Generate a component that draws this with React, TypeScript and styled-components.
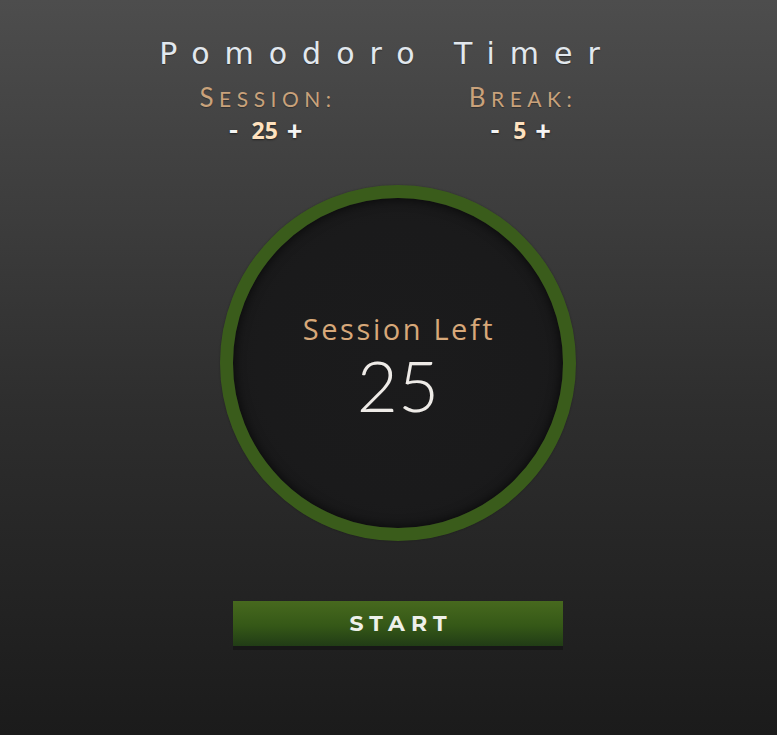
import React from "react";
import styled, { createGlobalStyle } from "styled-components";

const Global = createGlobalStyle`
  html, body { margin: 0; padding: 0; }
  body {
    min-height: 735px;
    background: linear-gradient(180deg, #4d4d4d 0%, #2e2e2e 55%, #1b1b1b 100%);
    font-family: "Lato", "Liberation Sans", sans-serif;
  }
`;

const Page = styled.main`
  display: flex;
  flex-direction: column;
  align-items: center;
  padding: 36px 0 0 19px;
  min-height: 735px;
  box-sizing: border-box;
`;

const Title = styled.h1`
  margin: 0;
  font-family: "DejaVu Sans", "Liberation Sans", sans-serif;
  font-weight: 400;
  font-size: 30px;
  line-height: 36px;
  letter-spacing: 15px;
  color: #e2e8ee;
  text-shadow: 0 1px 1px rgba(0, 0, 0, 0.35);
  padding-right: 22px;
`;

const Controls = styled.div`
  display: flex;
  gap: 55px;
  margin: 12px 10px 0 0;
`;

const Control = styled.div`
  width: 200px;
  display: flex;
  flex-direction: column;
  align-items: center;
`;

const Label = styled.div`
  font-family: "Lato", "Liberation Sans", sans-serif;
  font-size: 21px;
  line-height: 26px;
  text-transform: uppercase;
  letter-spacing: 5.5px;
  color: #c9a27b;
  margin-right: -5px;
  text-shadow: 0 1px 1px rgba(0, 0, 0, 0.3);
  &::first-letter {
    font-size: 26px;
  }
`;

const Values = styled.div`
  display: flex;
  align-items: center;
  margin-top: 4px;
  font-family: "Open Sans", "Lato", sans-serif;
  font-weight: 700;
  font-size: 23px;
  line-height: 28px;
`;

const Step = styled.button<{ $side: "l" | "r" }>`
  background: none;
  border: none;
  padding: 0;
  margin: ${(p) => (p.$side === "l" ? "0 13px 0 0" : "0 0 0 9px")};
  font-family: "Lato", sans-serif;
  font-weight: 900;
  font-size: 27px;
  line-height: 28px;
  color: #f4f4f4;
  cursor: pointer;
  text-shadow: 0 1px 2px rgba(0, 0, 0, 0.5);
`;

const Num = styled.span`
  color: #ffe2bf;
  text-shadow: 0 1px 2px rgba(0, 0, 0, 0.5);
`;

const Ring = styled.div`
  margin-top: 41px;
  width: 356px;
  height: 356px;
  box-sizing: border-box;
  border-radius: 50%;
  border: 13px solid #3a5c1b;
  background: radial-gradient(circle, #1b1b1c 0%, #1a1a1b 60%, #161617 100%);
  box-shadow: inset 0 0 12px rgba(0, 0, 0, 0.75), 0 0 2px rgba(0, 0, 0, 0.3);
  display: flex;
  flex-direction: column;
  align-items: center;
  justify-content: center;
  padding-top: 8px;
`;

const Caption = styled.div`
  font-family: "Open Sans", "Lato", sans-serif;
  font-weight: 400;
  font-size: 29px;
  line-height: 32px;
  letter-spacing: 2.6px;
  color: #d7a879;
  margin-right: -2px;
`;

const Time = styled.div`
  margin-top: 3px;
  font-family: "Lato", "Open Sans", sans-serif;
  font-weight: 300;
  font-size: 71px;
  line-height: 74px;
  color: #eeebe7;
`;

const Start = styled.button`
  margin-top: 60px;
  width: 330px;
  height: 49px;
  border: none;
  border-bottom: 4px solid #171717;
  padding: 0;
  background: linear-gradient(180deg, #47691e 0%, #355817 55%, #213c16 100%);
  font-family: "Montserrat", "Open Sans", sans-serif;
  font-weight: 700;
  font-size: 22px;
  letter-spacing: 6px;
  color: #eef0ea;
  cursor: pointer;
  text-indent: 6px;
`;

export default function App() {
  return (
    <>
      <Global />
      <Page>
        <Title>Pomodoro Timer</Title>
        <Controls>
          <Control>
            <Label>Session:</Label>
            <Values>
              <Step $side="l">-</Step>
              <Num>25</Num>
              <Step $side="r">+</Step>
            </Values>
          </Control>
          <Control>
            <Label>Break:</Label>
            <Values>
              <Step $side="l">-</Step>
              <Num>5</Num>
              <Step $side="r">+</Step>
            </Values>
          </Control>
        </Controls>
        <Ring>
          <Caption>Session Left</Caption>
          <Time>25</Time>
        </Ring>
        <Start>START</Start>
      </Page>
    </>
  );
}
